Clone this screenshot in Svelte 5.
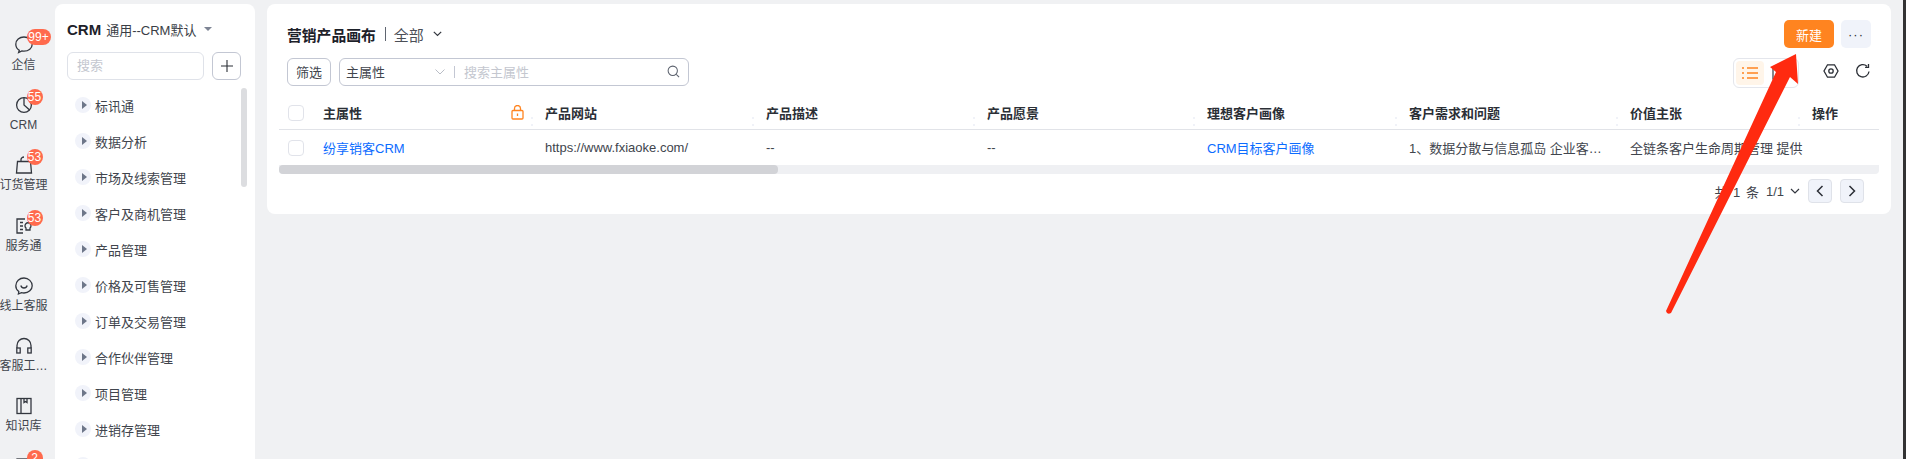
<script lang="ts">
	const railItems = [
		{ label: '企信', icon: 'chat', badge: '99+' },
		{ label: 'CRM', icon: 'pie', badge: '55' },
		{ label: '订货管理', icon: 'bag', badge: '53' },
		{ label: '服务通', icon: 'service', badge: '53' },
		{ label: '线上客服', icon: 'smile' },
		{ label: '客服工…', icon: 'headset' },
		{ label: '知识库', icon: 'book' },
		{ label: '', icon: 'more', badge: '2' }
	];

	const menu = [
		'标讯通',
		'数据分析',
		'市场及线索管理',
		'客户及商机管理',
		'产品管理',
		'价格及可售管理',
		'订单及交易管理',
		'合作伙伴管理',
		'项目管理',
		'进销存管理',
		''
	];

	const columns = ['产品网站', '产品描述', '产品愿景', '理想客户画像', '客户需求和问题', '价值主张', '操作'];
</script>

<div class="page">
	<nav class="rail">
		{#each railItems as item}
			<div class="rail-item">
				<div class="rail-icon">
					<svg width="20" height="20" viewBox="0 0 20 20" fill="none" stroke="#33373f" stroke-width="1.3">
						{#if item.icon === 'chat'}
							<path d="M10 2c-4.6 0-8.200 3-8.200 7.200 0 2.700 1.500 4.800 3.500 6l-.7 2.300 3.300-1.500c.7.100 1.400.2 2.100.2 4.600 0 8.200-3 8.200-7S14.600 2 10 2z" />
						{:else if item.icon === 'pie'}
							<circle cx="10" cy="10" r="7.400" />
							<path d="M10 2.600V10l5.600 5" />
						{:else if item.icon === 'bag'}
							<path d="M3.500 6.500h13l1 11.500h-15zM7 6.500V4.500C7 3 8.500 2 10 2" />
						{:else if item.icon === 'service'}
							<path d="M11 3H3v14h6M6 6.500h3M6 10h3M6 13.500h3" />
							<path d="M12 12a3 3 0 1 1 4 0v2h-4z" />
						{:else if item.icon === 'smile'}
							<path d="M10 2c-4.600 0-8.200 3.300-8.200 7.700 0 2.500 1.100 4.500 3 5.900l-.4 2.400 3-1.300c.8.200 1.700.3 2.600.3 4.600 0 8.200-3.300 8.200-7.300S14.600 2 10 2z" />
							<path d="M6.800 9.500c.5 1.700 1.700 2.500 3.200 2.500s2.700-.8 3.200-2.500" />
						{:else if item.icon === 'headset'}
							<path d="M3 12V9.500a7 7 0 0 1 14 0V12" />
							<rect x="2.800" y="12" width="3.400" height="5" />
							<rect x="13.800" y="12" width="3.400" height="5" />
						{:else if item.icon === 'book'}
							<rect x="3" y="2.500" width="14" height="15" />
							<path d="M7 2.500v15M10 2.500v4l1.500-1 1.500 1v-4" />
						{:else}
							<rect x="3" y="3" width="14" height="14" />
						{/if}
					</svg>
					{#if item.badge}
						<span class="badge" class:wide={item.badge.length > 2}>{item.badge}</span>
					{/if}
				</div>
				<span class="rail-label">{item.label}</span>
			</div>
		{/each}
	</nav>

	<aside class="side">
		<div class="side-title">
			<b>CRM</b>
			<span>通用--CRM默认</span>
			<i class="caret"></i>
		</div>
		<div class="side-search">
			<div class="search-box">搜索</div>
			<button class="plus" aria-label="添加">
				<svg width="12" height="12" viewBox="0 0 12 12" stroke="#2b2f36" stroke-width="1.1"><path d="M6 0v12M0 6h12" /></svg>
			</button>
		</div>
		<div class="side-list">
			<i class="side-scroll"></i>
			{#each menu as name}
				<div class="menu-row">
					<span class="dot"><i></i></span>
					<span>{name}</span>
				</div>
			{/each}
		</div>
	</aside>

	<main class="card">
		<div class="head">
			<div class="title">
				<b>营销产品画布</b>
				<i class="sep"></i>
				<span>全部</span>
				<svg width="9" height="6" viewBox="0 0 9 6" fill="none" stroke="#33373f" stroke-width="1.2"><path d="M.8.8l3.700 3.700L8.200.8" /></svg>
			</div>
			<div class="head-actions">
				<button class="primary">新建</button>
				<button class="more">···</button>
			</div>
		</div>

		<div class="tools">
			<button class="filter">筛选</button>
			<div class="query">
				<span class="query-field">主属性</span>
				<svg class="query-caret" width="10" height="6" viewBox="0 0 10 6" fill="none" stroke="#b9bdc6"><path d="M.5.5L5 5 9.500.5" /></svg>
				<i class="query-sep"></i>
				<span class="query-hint">搜索主属性</span>
				<svg class="query-icon" width="13" height="13" viewBox="0 0 14 14" fill="none" stroke="#5b616d" stroke-width="1.1"><circle cx="6.200" cy="6.200" r="5" /><path d="M10 10l3 3" /></svg>
			</div>
			<div class="tools-right">
				<div class="view-toggle">
					<span class="view-on">
						<svg width="16" height="12" viewBox="0 0 16 12" stroke="#ff8420" stroke-width="1.3"><path d="M0 1h2M5 1h11M0 6h2M5 6h11M0 11h2M5 11h11" /></svg>
					</span>
					<svg width="14" height="14" viewBox="0 0 14 14" fill="none" stroke="#33373f" stroke-width="1.2"><rect x="1" y="1" width="12" height="12" /><path d="M5 1v12" /></svg>
				</div>
				<svg class="tool-icon" width="16" height="16" viewBox="0 0 16 16" fill="none" stroke="#2b2f36" stroke-width="1.3"><path d="M4.500 1.800h7L15 8l-3.500 6.200h-7L1 8z" /><circle cx="8" cy="8" r="2.200" /></svg>
				<svg class="tool-icon" width="16" height="16" viewBox="0 0 16 16" fill="none" stroke="#2b2f36" stroke-width="1.3"><path d="M14 8.500A6.200 6.200 0 1 1 12 3.200M13.500 1v3.400h-3.400" /></svg>
			</div>
		</div>

		<div class="table">
			<div class="row header">
				<div class="cell check"><i class="box"></i></div>
				<div class="cell main-col">
					<span>主属性</span>
					<svg width="13" height="15" viewBox="0 0 13 15" fill="none" stroke="#ff8420" stroke-width="1.3"><rect x="1" y="5.500" width="11" height="8.500" rx="1" /><path d="M3.500 5.500V3.500a3 3 0 0 1 6 0v2M6.500 8.500v2.500" /></svg>
				</div>
				{#each columns as col}
					<div class="cell">{col}</div>
				{/each}
			</div>
			<div class="row body">
				<div class="cell check"><i class="box"></i></div>
				<div class="cell main-col link">纷享销客CRM</div>
				<div class="cell">https://www.fxiaoke.com/</div>
				<div class="cell">--</div>
				<div class="cell">--</div>
				<div class="cell link">CRM目标客户画像</div>
				<div class="cell">1、数据分散与信息孤岛 企业客…</div>
				<div class="cell">全链条客户生命周期管理 提供</div>
				<div class="cell"></div>
			</div>
			<div class="hscroll"><i></i></div>
		</div>

		<div class="pager">
			<span class="total">共 1 条</span>
			<span class="pages">1/1</span>
			<svg width="10" height="6" viewBox="0 0 10 6" fill="none" stroke="#33373f" stroke-width="1.2"><path d="M1 1l4 4 4-4" /></svg>
			<button class="page-btn" aria-label="上一页"><svg width="8" height="12" viewBox="0 0 8 12" fill="none" stroke="#2b2f36" stroke-width="1.5"><path d="M6.500 1L1.500 6l5 5" /></svg></button>
			<button class="page-btn" aria-label="下一页"><svg width="8" height="12" viewBox="0 0 8 12" fill="none" stroke="#2b2f36" stroke-width="1.5"><path d="M1.500 1l5 5-5 5" /></svg></button>
		</div>
	</main>

	<i class="edge"></i>

	<!-- red annotation drawn over the page -->
	<svg class="arrow" width="1906" height="459" viewBox="0 0 1906 459">
		<path d="M1796 54L1770 67 1776 72 1666 311Q1667 315 1671 313L1790 77 1798 84z" fill="#ff2a10" />
	</svg>
</div>

<style>
	:global(body) {
		margin: 0;
		overflow: hidden;
	}

	.page {
		position: relative;
		display: flex;
		width: 1906px;
		height: 459px;
		overflow: hidden;
		background: #f0f1f3;
		font-family: 'Liberation Sans', 'Noto Sans CJK SC', sans-serif;
		font-size: 13px;
		color: #2b2f36;
	}

	.rail {
		flex: none;
		width: 47px;
		margin-right: 8px;
		padding-top: 35px;
		display: flex;
		flex-direction: column;
		gap: 21.2px;
		align-items: center;
	}

	.rail-item {
		flex: none;
		width: 47px;
		height: 39px;
		display: flex;
		flex-direction: column;
		align-items: center;
		white-space: nowrap;
	}

	.rail-icon {
		position: relative;
		width: 20px;
		height: 20px;
		flex: none;
	}

	.rail-label {
		margin-top: 2px;
		font-size: 12px;
		line-height: 16px;
		color: #41454d;
	}

	.badge {
		position: absolute;
		left: 13px;
		top: -6px;
		width: 16px;
		height: 16px;
		border-radius: 8px;
		background: #ff6a4d;
		color: #fff;
		font-size: 12px;
		line-height: 16px;
		text-align: center;
	}

	.badge.wide {
		width: 24px;
	}

	.side {
		flex: none;
		box-sizing: border-box;
		width: 200px;
		margin-top: 4px;
		padding: 0 12px;
		background: #fff;
		border-radius: 8px 8px 0 0;
	}

	.side-title {
		display: flex;
		align-items: center;
		height: 30px;
		padding-top: 10px;
		white-space: nowrap;
		color: #3a3e46;
	}

	.side-title b {
		font-size: 15px;
		color: #1d2129;
		margin-right: 5px;
	}

	.caret {
		margin-left: 8px;
		border: 4px solid transparent;
		border-top-color: #7d8494;
		border-bottom: 0;
	}

	.side-search {
		display: flex;
		gap: 8px;
		margin-top: 8px;
	}

	.search-box {
		box-sizing: border-box;
		width: 137px;
		height: 28px;
		padding-left: 9px;
		border: 1px solid #dfe2e9;
		border-radius: 6px;
		line-height: 26px;
		color: #c4c7cf;
	}

	.plus {
		box-sizing: border-box;
		width: 29px;
		height: 28px;
		padding: 0;
		display: grid;
		place-items: center;
		background: #fff;
		border: 1px solid #c3c7d3;
		border-radius: 6px;
	}

	.side-list {
		position: relative;
		margin-top: 7px;
	}

	.side-scroll {
		position: absolute;
		right: -4px;
		top: 1px;
		width: 6px;
		height: 99px;
		border-radius: 3px;
		background: #dcdde0;
	}

	.menu-row {
		display: flex;
		align-items: center;
		gap: 4px;
		height: 36px;
		padding-left: 8px;
		color: #41454d;
	}

	.dot {
		width: 16px;
		height: 16px;
		border-radius: 50%;
		background: #f1f3fa;
		display: grid;
		place-items: center;
	}

	.dot i {
		margin-left: 2px;
		border-left: 5px solid #6d7689;
		border-top: 4px solid transparent;
		border-bottom: 4px solid transparent;
	}

	.card {
		flex: none;
		box-sizing: border-box;
		width: 1624px;
		height: 210px;
		margin: 4px 0 0 12px;
		padding: 16px 12px 0;
		background: #fff;
		border-radius: 8px;
	}

	.head {
		display: flex;
		justify-content: space-between;
		align-items: center;
		height: 28px;
		padding: 0 8px;
	}

	.title {
		display: flex;
		align-items: center;
	}

	.title b {
		font-size: 14.8px;
		font-weight: 600;
		color: #1d2129;
	}

	.sep {
		width: 1px;
		height: 14px;
		margin: 0 8px 0 9px;
		background: #5f6570;
	}

	.title span {
		font-size: 15px;
		color: #4b4f57;
		margin-right: 9px;
	}

	.head-actions {
		display: flex;
		gap: 7px;
	}

	.primary {
		box-sizing: border-box;
		width: 50px;
		height: 28px;
		padding: 0;
		border: 0;
		border-radius: 5px;
		background: #ff8420;
		color: #fff;
		font: inherit;
	}

	.more {
		box-sizing: border-box;
		width: 30px;
		height: 28px;
		padding: 0;
		border: 0;
		border-radius: 5px;
		background: #f0f3fa;
		color: #2b2f36;
		font: 13px 'Liberation Sans', sans-serif;
		letter-spacing: 1px;
	}

	.tools {
		display: flex;
		align-items: flex-start;
		gap: 8px;
		height: 30px;
		margin-top: 10px;
		padding-left: 8px;
	}

	.filter {
		box-sizing: border-box;
		width: 44px;
		height: 28px;
		padding: 0 0 2px;
		background: #fff;
		border: 1px solid #c3c7d3;
		border-radius: 6px;
		color: #41454d;
		font: inherit;
	}

	.query {
		box-sizing: border-box;
		width: 350px;
		height: 28px;
		padding: 0 8px 1px 6px;
		display: flex;
		align-items: center;
		border: 1px solid #c3c7d3;
		border-radius: 6px;
	}

	.query-field {
		width: 88px;
		color: #41454d;
	}

	.query-caret {
		margin-left: 1px;
	}

	.query-sep {
		width: 1px;
		height: 12px;
		margin: 0 9px;
		background: #c3c7d3;
	}

	.query-hint {
		color: #c4c7cf;
	}

	.query-icon {
		margin-left: auto;
	}

	.tools-right {
		margin-left: auto;
		display: flex;
		align-items: center;
		padding-right: 8px;
	}

	.view-toggle {
		box-sizing: border-box;
		width: 66px;
		height: 30px;
		margin-right: 24px;
		padding: 2px;
		display: flex;
		align-items: center;
		gap: 8px;
		border: 1px solid #e4e6ec;
		border-radius: 6px;
	}

	.view-on {
		width: 28px;
		height: 24px;
		border-radius: 4px;
		background: #fff5e9;
		display: grid;
		place-items: center;
	}

	.tool-icon {
		margin-bottom: 4px;
	}

	.tool-icon + .tool-icon {
		margin-left: 16px;
	}

	.table {
		margin-top: 8px;
	}

	.row {
		display: grid;
		grid-template-columns: 30px 222px 221px 221px 220px 202px 221px 182px 81px;
	}

	.header {
		height: 33px;
		border-bottom: 1px solid #e1e3e8;
		font-weight: 600;
	}

	.header .cell {
		padding-bottom: 1px;
	}

	.header .cell:nth-child(n + 3)::after {
		content: '';
		position: absolute;
		left: 0;
		top: 21px;
		width: 2px;
		height: 2px;
		background: #f0f2f8;
		box-shadow: 0 7px 0 #f0f2f8;
	}

	.body {
		height: 35px;
		color: #41454d;
	}

	.cell {
		position: relative;
		display: flex;
		align-items: center;
		padding: 0 14px;
		min-width: 0;
		white-space: nowrap;
	}

	.check,
	.header .check {
		padding: 0 0 0 9px;
	}

	.main-col,
	.header .main-col {
		justify-content: space-between;
		padding-right: 7px;
	}

	.box {
		box-sizing: border-box;
		width: 16px;
		height: 16px;
		border: 1px solid #e1e3ea;
		border-radius: 4px;
	}

	.link {
		color: #0c6cff;
	}

	.hscroll {
		height: 9px;
		background: #eff0f3;
		border-radius: 0 0 4px 4px;
	}

	.hscroll i {
		display: block;
		width: 499px;
		height: 100%;
		border-radius: 4px;
		background: #d2d3d7;
	}

	.pager {
		display: flex;
		align-items: center;
		justify-content: flex-end;
		height: 24px;
		margin-top: 5px;
		padding-right: 15px;
		color: #41454d;
	}

	.total {
		letter-spacing: 1px;
		margin-right: 6px;
	}

	.pages {
		margin-right: 6px;
	}

	.page-btn {
		box-sizing: border-box;
		width: 24px;
		height: 24px;
		margin-left: 8px;
		padding: 0;
		display: grid;
		place-items: center;
		background: #f0f3fa;
		border: 1px solid #dfe2e9;
		border-radius: 4px;
	}

	.edge {
		width: 3px;
		margin-left: auto;
		background: #333;
	}

	.arrow {
		position: absolute;
		left: 0;
		top: 0;
		pointer-events: none;
	}
</style>
